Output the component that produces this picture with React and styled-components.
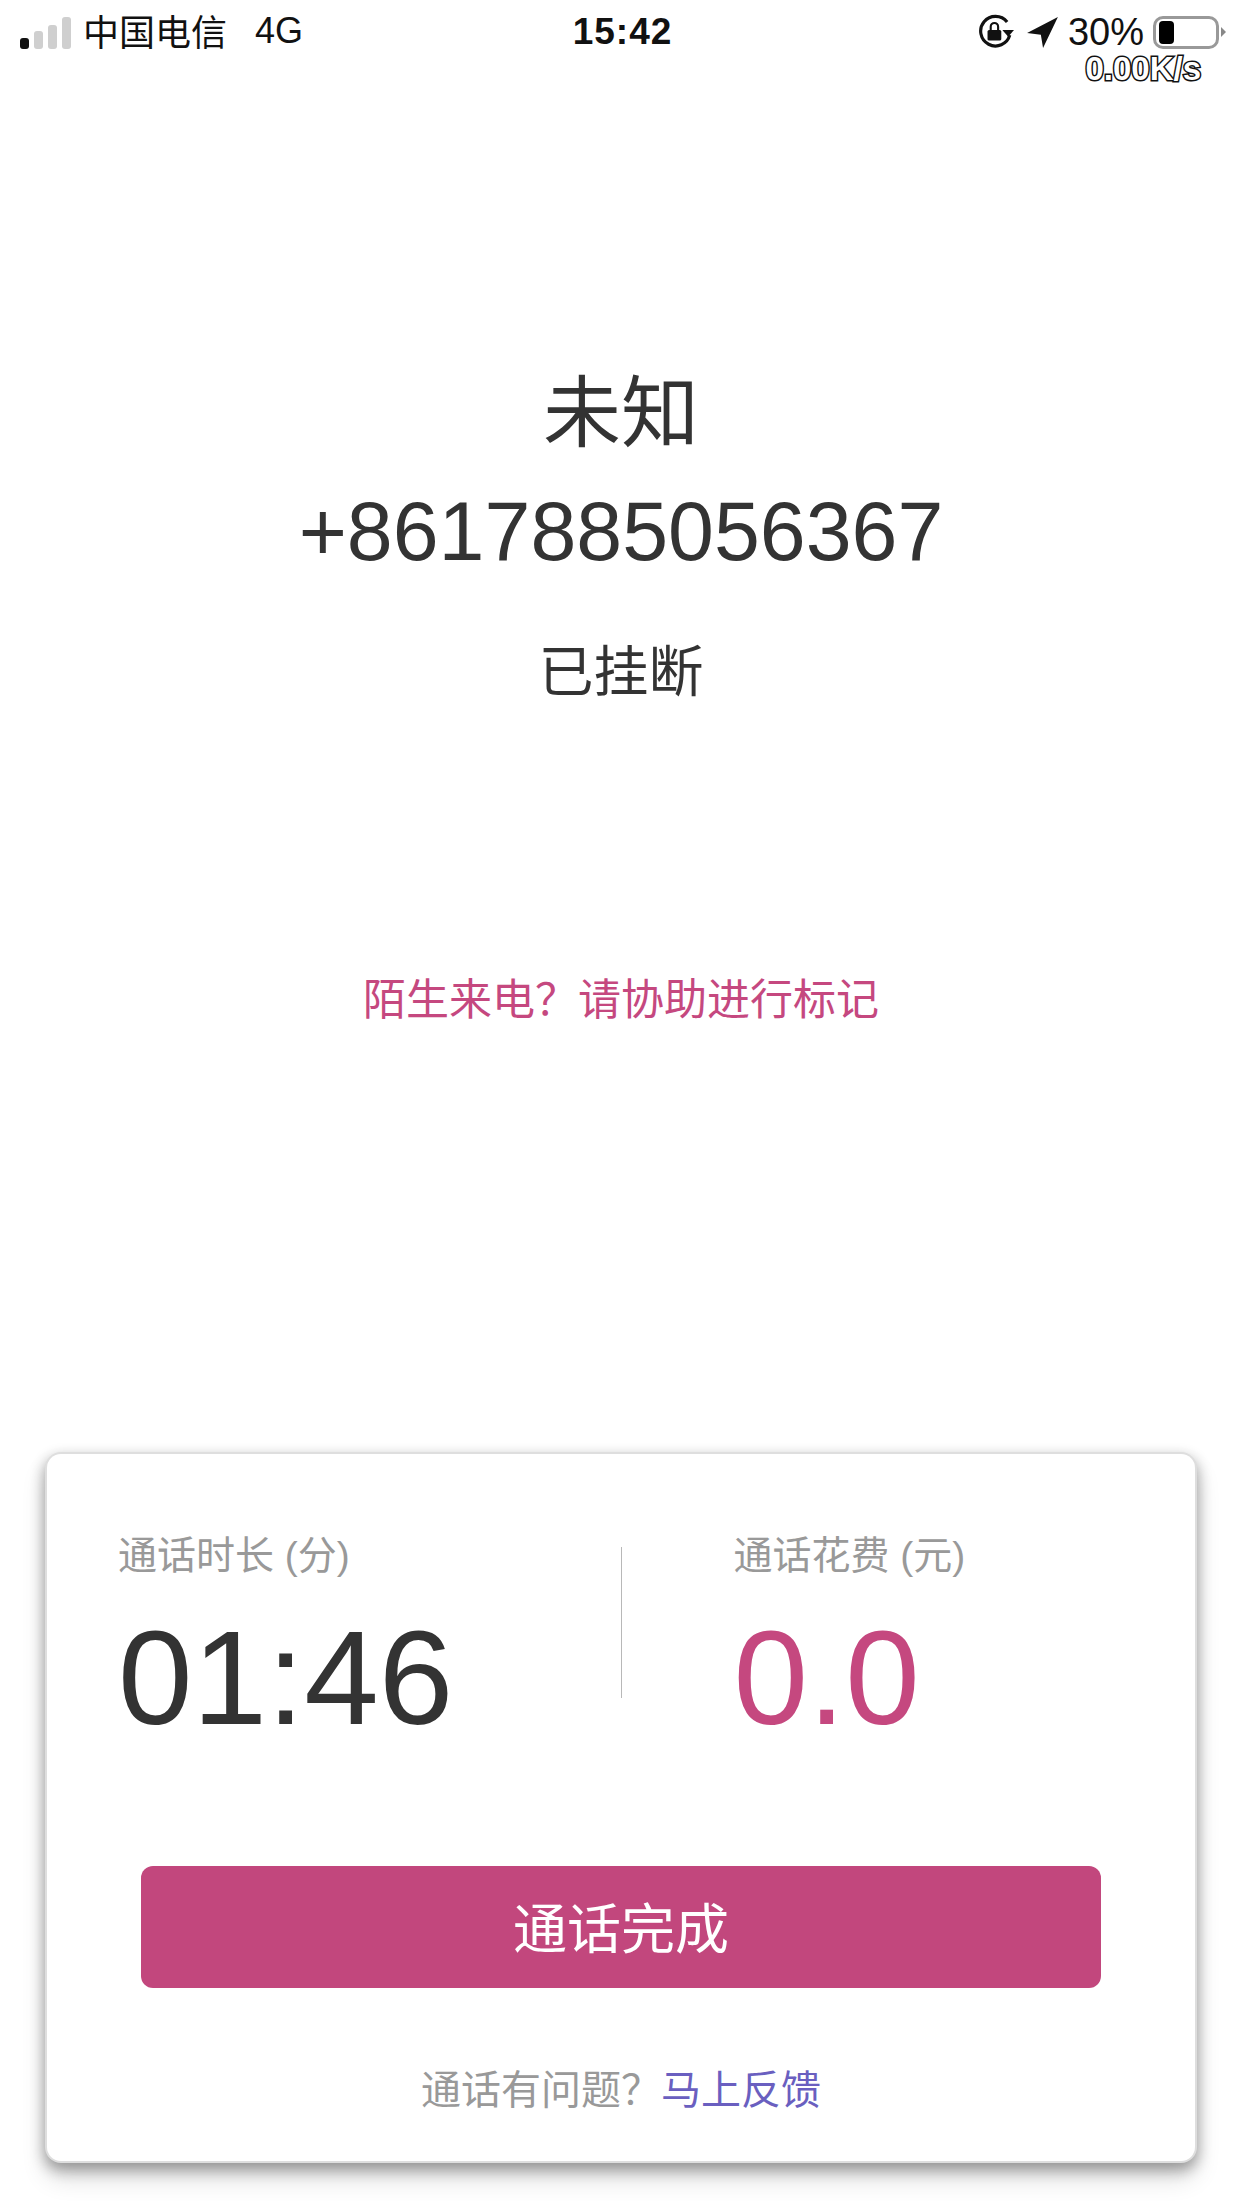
import React from 'react';
import styled, { createGlobalStyle } from 'styled-components';

const FONT = '"Liberation Sans", "Noto Sans CJK SC", sans-serif';

const GlobalStyle = createGlobalStyle`
  html, body {
    margin: 0;
    padding: 0;
    background: #fff;
    font-family: ${FONT};
  }
`;

const Page = styled.div`
  width: 1242px;
  height: 2208px;
  background: #fff;
  overflow: hidden;
  display: flex;
  flex-direction: column;
`;

const StatusBar = styled.div`
  position: relative;
  height: 64px;
  display: grid;
  grid-template-columns: 1fr auto 1fr;
  align-items: center;
  padding: 0 17px 0 20px;
  color: #111;
  font-size: 36px;
`;

const StatusLeft = styled.div`
  display: flex;
  align-items: center;
  gap: 14px;
`;

const Signal = styled.div`
  display: flex;
  align-items: flex-end;
  gap: 5px;
  height: 32px;
  margin-top: 2px;
  margin-right: -2px;
`;

const SignalBar = styled.span`
  width: 9px;
  height: ${p => p.$h}px;
  border-radius: 3px;
  background: ${p => (p.$on ? '#111' : '#cfcfcf')};
`;

const Carrier = styled.span`
  margin-top: -4px;
`;

const Network = styled.span`
  margin-left: 14px;
  margin-top: -2px;
`;

const Clock = styled.div`
  font-weight: 700;
  font-size: 37px;
  letter-spacing: 1px;
`;

const StatusRight = styled.div`
  display: flex;
  align-items: center;
  justify-content: flex-end;
  gap: 9px;
`;

const Percent = styled.span`
  font-size: 38px;
`;

const Battery = styled.div`
  position: relative;
  box-sizing: border-box;
  width: 66px;
  height: 33px;
  border: 3px solid #999;
  border-radius: 10px;
  padding: 2px 3px;
  margin-right: 6px;
  &::after {
    content: '';
    position: absolute;
    right: -10px;
    top: 8px;
    border-left: 5px solid #888;
    border-top: 5px solid transparent;
    border-bottom: 5px solid transparent;
  }
`;

const BatteryFill = styled.div`
  width: 15px;
  height: 100%;
  border-radius: 4px;
  background: #000;
`;

const Speed = styled.div`
  position: absolute;
  top: 51px;
  right: 41px;
  font-size: 33px;
  font-weight: 700;
  line-height: 36px;
  color: #fff;
  -webkit-text-stroke: 3px #111;
  paint-order: stroke fill;
`;

const Caller = styled.div`
  display: flex;
  flex-direction: column;
  align-items: center;
  color: #333;
  padding-top: 305px;
`;

const CallerName = styled.div`
  font-size: 78px;
  line-height: 90px;
`;

const CallerNumber = styled.div`
  font-size: 82.5px;
  line-height: 90px;
  margin-top: 27px;
`;

const CallStatus = styled.div`
  font-size: 55px;
  line-height: 70px;
  margin-top: 61px;
`;

const MarkLink = styled.div`
  margin-top: 263px;
  text-align: center;
  font-size: 43px;
  line-height: 60px;
  color: #c5487f;
`;

const Card = styled.div`
  box-sizing: border-box;
  flex: none;
  width: 1148px;
  height: 707px;
  margin: 424px 0 0 47px;
  background: #fff;
  border-radius: 14px;
  box-shadow: 0 0 0 2px #dedede, 0 6px 14px 3px rgba(0, 0, 0, 0.32), 0 16px 26px rgba(0, 0, 0, 0.16);
  padding-top: 77px;
  display: flex;
  flex-direction: column;
  align-items: center;
`;

const Stats = styled.div`
  width: 100%;
  display: grid;
  grid-template-columns: 1fr 1px 1fr;
`;

const Stat = styled.div`
  padding-left: ${p => p.$indent}px;
`;

const StatLabel = styled.div`
  font-size: 39px;
  line-height: 50px;
  color: #999;
`;

const StatValue = styled.div`
  font-size: 134px;
  line-height: 140px;
  margin-top: 27px;
  color: ${p => (p.$accent ? '#c5487f' : '#333')};
`;

const Divider = styled.div`
  width: 1px;
  height: 151px;
  margin-top: 16px;
  background: #b8b8b8;
`;

const DoneButton = styled.button`
  display: block;
  width: 960px;
  height: 122px;
  margin-top: 118px;
  padding: 0 0 4px;
  border: none;
  border-radius: 12px;
  background: #c2477d;
  color: #fff;
  font-family: ${FONT};
  font-size: 54px;
`;

const Feedback = styled.div`
  margin-top: 72px;
  font-size: 40px;
  line-height: 60px;
  color: #999;
`;

const FeedbackLink = styled.span`
  color: #6a5fc0;
`;

const RotationIcon = styled.svg`
  margin-right: 3px;
`;

const RotationLock = () => (
  <RotationIcon width="36" height="36" viewBox="0 0 34 34" fill="none">
    <path d="M30 20A14 14 0 1 1 27.5 7.5" stroke="#111" strokeWidth="3" />
    <path d="M23 15h11l-5.5 6.5z" fill="#111" />
    <rect x="9" y="15" width="13" height="10" rx="1.5" fill="#111" />
    <path d="M12 16v-4a3.5 3.5 0 0 1 7 0v4" stroke="#111" strokeWidth="2" />
  </RotationIcon>
);

const LocationArrow = () => (
  <svg width="33" height="33" viewBox="0 0 30 30">
    <path d="M29 1L1 15.5l12.5 1.5L15.5 29z" fill="#111" />
  </svg>
);

const App = () => (
  <Page>
    <GlobalStyle />
    <StatusBar>
      <StatusLeft>
        <Signal>
          <SignalBar $on $h={11} />
          <SignalBar $h={18} />
          <SignalBar $h={24} />
          <SignalBar $h={32} />
        </Signal>
        <Carrier>中国电信</Carrier>
        <Network>4G</Network>
      </StatusLeft>
      <Clock>15:42</Clock>
      <StatusRight>
        <RotationLock />
        <LocationArrow />
        <Percent>30%</Percent>
        <Battery>
          <BatteryFill />
        </Battery>
      </StatusRight>
      <Speed>0.00K/s</Speed>
    </StatusBar>

    <Caller>
      <CallerName>未知</CallerName>
      <CallerNumber>+8617885056367</CallerNumber>
      <CallStatus>已挂断</CallStatus>
    </Caller>

    <MarkLink>陌生来电？请协助进行标记</MarkLink>

    <Card>
      <Stats>
        <Stat $indent={71}>
          <StatLabel>通话时长 (分)</StatLabel>
          <StatValue>01:46</StatValue>
        </Stat>
        <Divider />
        <Stat $indent={112}>
          <StatLabel>通话花费 (元)</StatLabel>
          <StatValue $accent>0.0</StatValue>
        </Stat>
      </Stats>
      <DoneButton>通话完成</DoneButton>
      <Feedback>
        通话有问题？<FeedbackLink>马上反馈</FeedbackLink>
      </Feedback>
    </Card>
  </Page>
);

export default App;
